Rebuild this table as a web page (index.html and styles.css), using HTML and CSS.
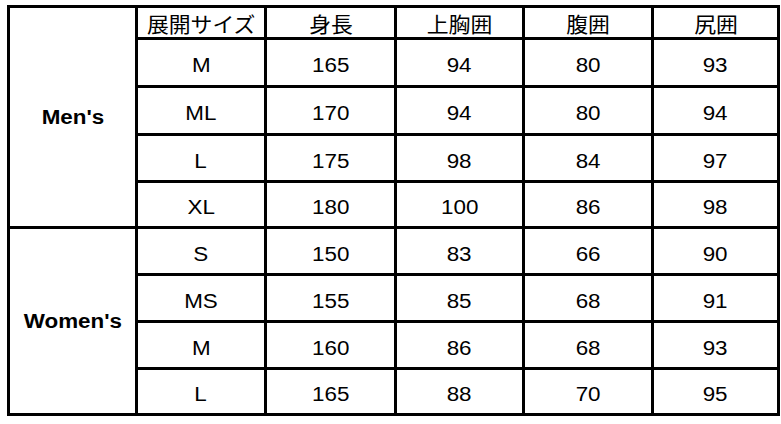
FILE: index.html
```html
<!DOCTYPE html>
<html lang="ja">
<head>
<meta charset="utf-8">
<title>サイズ表</title>
<link rel="stylesheet" href="styles.css">
</head>
<body>
<div class="size-table">
  <div class="cell label men"><span class="t">Men's</span></div>
  <div class="cell head"><span class="t">展開サイズ</span></div>
  <div class="cell head"><span class="t">身長</span></div>
  <div class="cell head"><span class="t">上胸囲</span></div>
  <div class="cell head"><span class="t">腹囲</span></div>
  <div class="cell head"><span class="t">尻囲</span></div>

  <div class="cell"><span class="t">M</span></div>
  <div class="cell"><span class="t">165</span></div>
  <div class="cell"><span class="t">94</span></div>
  <div class="cell"><span class="t">80</span></div>
  <div class="cell"><span class="t">93</span></div>

  <div class="cell"><span class="t">ML</span></div>
  <div class="cell"><span class="t">170</span></div>
  <div class="cell"><span class="t">94</span></div>
  <div class="cell"><span class="t">80</span></div>
  <div class="cell"><span class="t">94</span></div>

  <div class="cell"><span class="t">L</span></div>
  <div class="cell"><span class="t">175</span></div>
  <div class="cell"><span class="t">98</span></div>
  <div class="cell"><span class="t">84</span></div>
  <div class="cell"><span class="t">97</span></div>

  <div class="cell"><span class="t">XL</span></div>
  <div class="cell"><span class="t">180</span></div>
  <div class="cell"><span class="t">100</span></div>
  <div class="cell"><span class="t">86</span></div>
  <div class="cell"><span class="t">98</span></div>

  <div class="cell label women"><span class="t">Women's</span></div>

  <div class="cell"><span class="t">S</span></div>
  <div class="cell"><span class="t">150</span></div>
  <div class="cell"><span class="t">83</span></div>
  <div class="cell"><span class="t">66</span></div>
  <div class="cell"><span class="t">90</span></div>

  <div class="cell"><span class="t">MS</span></div>
  <div class="cell"><span class="t">155</span></div>
  <div class="cell"><span class="t">85</span></div>
  <div class="cell"><span class="t">68</span></div>
  <div class="cell"><span class="t">91</span></div>

  <div class="cell"><span class="t">M</span></div>
  <div class="cell"><span class="t">160</span></div>
  <div class="cell"><span class="t">86</span></div>
  <div class="cell"><span class="t">68</span></div>
  <div class="cell"><span class="t">93</span></div>

  <div class="cell"><span class="t">L</span></div>
  <div class="cell"><span class="t">165</span></div>
  <div class="cell"><span class="t">88</span></div>
  <div class="cell"><span class="t">70</span></div>
  <div class="cell"><span class="t">95</span></div>
</div>
</body>
</html>
```

FILE: styles.css
```css
html, body {
  margin: 0;
  padding: 0;
  background: #ffffff;
}

body {
  font-family: "Liberation Sans", Arial, "Noto Sans CJK JP", sans-serif;
  color: #000000;
}

.size-table {
  display: grid;
  width: max-content;
  margin: 5px 0 0 7px;
  padding: 3px;
  gap: 3px;
  background: #000000;
  grid-template-columns: 125px 126px 127px 125px 126px 123px;
  grid-template-rows: 29px 45px 45px 44px 43px 44px 44px 44px 43px;
}

.cell {
  background: #ffffff;
  display: flex;
  align-items: center;
  justify-content: center;
  padding-top: 5px;
  box-sizing: border-box;
  font-size: 20px;
  line-height: 1;
}

.cell.head {
  padding-top: 3px;
  font-size: 21px;
  font-family: "Liberation Sans", "Noto Sans CJK JP", sans-serif;
}

.cell.head .t {
  transform: scaleX(1.04);
}

.cell.label {
  padding-top: 0;
  font-weight: bold;
  grid-column: 1;
}

.men {
  grid-row: 1 / span 5;
}

.women {
  grid-row: 6 / span 4;
}

.t {
  display: inline-block;
  white-space: nowrap;
  transform: scaleX(1.12);
}
```
